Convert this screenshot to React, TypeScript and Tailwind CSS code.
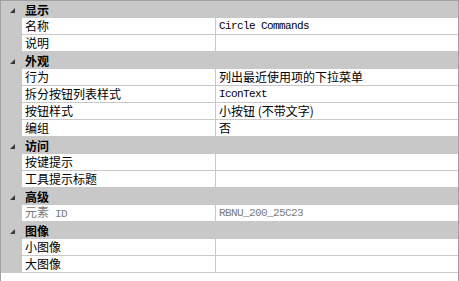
import React from 'react'

type Row =
  | { kind: 'cat'; label: string }
  | { kind: 'prop'; name: React.ReactNode; value?: React.ReactNode; disabled?: boolean }

const mono = (s: string) => (
  <span className="font-['Liberation_Mono',monospace] text-[11px] tracking-[-0.6px]">{s}</span>
)

const rows: Row[] = [
  { kind: 'cat', label: '显示' },
  { kind: 'prop', name: '名称', value: mono('Circle Commands') },
  { kind: 'prop', name: '说明' },
  { kind: 'cat', label: '外观' },
  { kind: 'prop', name: '行为', value: '列出最近使用项的下拉菜单' },
  { kind: 'prop', name: '拆分按钮列表样式', value: mono('IconText') },
  { kind: 'prop', name: '按钮样式', value: '小按钮 (不带文字)' },
  { kind: 'prop', name: '编组', value: '否' },
  { kind: 'cat', label: '访问' },
  { kind: 'prop', name: '按键提示' },
  { kind: 'prop', name: '工具提示标题' },
  { kind: 'cat', label: '高级' },
  {
    kind: 'prop',
    name: (
      <span>
        元素{mono('\u00a0ID')}
      </span>
    ),
    value: mono('RBNU_200_25C23'),
    disabled: true,
  },
  { kind: 'cat', label: '图像' },
  { kind: 'prop', name: '小图像' },
  { kind: 'prop', name: '大图像' },
]

function Glyph() {
  return (
    <svg width="5" height="5" viewBox="0 0 5 5" className="block">
      <polygon points="5,0 5,5 0,5" fill="#3a3a3a" />
    </svg>
  )
}

export default function App() {
  return (
    <div className="w-[459px] h-[281px] overflow-hidden bg-white border-l border-t border-r border-[#a0a0a0] text-[12px] leading-none text-black font-['Noto_Sans_CJK_SC','Noto_Sans',sans-serif]">
      {rows.map((r, i) =>
        r.kind === 'cat' ? (
          <div key={i} className="flex h-[17px] bg-[#c8c8c8]">
            <div className="w-[21px] pl-[9px] pt-[7px]">
              <Glyph />
            </div>
            <div className="flex items-center pl-[3px] font-bold">{r.label}</div>
          </div>
        ) : (
          <div key={i} className={`flex h-[17px] ${r.disabled ? 'text-[#7a7a7a]' : ''}`}>
            <div className="w-[21px] bg-[#c8c8c8]" />
            <div className="flex w-[193px] items-center pl-[3px] border-b border-[#c8c8c8] whitespace-nowrap">
              {r.name}
            </div>
            <div className="flex flex-1 items-center pl-[3px] border-l border-b border-[#c8c8c8] whitespace-nowrap">
              {r.value}
            </div>
          </div>
        )
      )}
    </div>
  )
}
